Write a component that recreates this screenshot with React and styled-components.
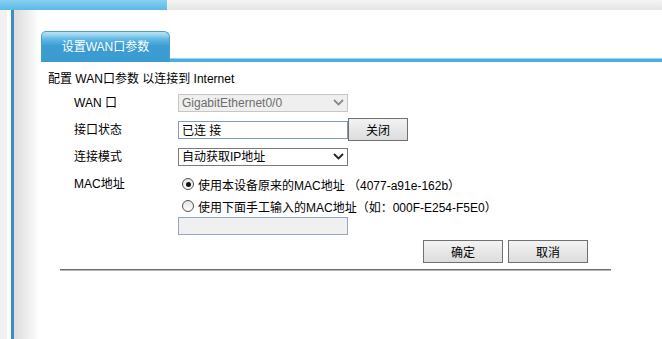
import React from 'react';
import styled, { createGlobalStyle } from 'styled-components';

const GlobalStyle = createGlobalStyle`
  html, body {
    margin: 0;
    padding: 0;
    background: #fff;
  }
  body {
    font-family: "Liberation Sans", Arial, "Noto Sans CJK SC", sans-serif;
    font-size: 12px;
    color: #000;
  }
`;

const Page = styled.div`
  width: 662px;
  height: 339px;
  overflow: hidden;
  display: flex;
  flex-direction: column;
`;

const TopBar = styled.div`
  display: flex;
  height: 10px;
  flex-shrink: 0;
`;

const TopSeg = styled.div`
  width: ${p => (p.$w ? `${p.$w}px` : 'auto')};
  flex: ${p => (p.$w ? 'none' : '1')};
  background: ${p =>
    p.$blue
      ? 'linear-gradient(#88d0f2, #5cb8e6)'
      : 'linear-gradient(#f4f4f4, #e5e5e5)'};
`;

const Body = styled.div`
  flex: 1;
  display: flex;
`;

const Rail = styled.div`
  width: 38px;
  flex-shrink: 0;
  background: linear-gradient(
    to right,
    #f1f1f1 0,
    #f1f1f1 7px,
    #fff 7px,
    #fff 11px,
    #3d8dc2 11px,
    #3d8dc2 14px,
    #dcdcdc 14px,
    #fcfcfc 38px
  );
`;

const Content = styled.div`
  flex: 1;
  padding-top: 21px;
`;

const TabHeader = styled.div`
  display: flex;
  align-items: flex-end;
  height: 31px;
  margin-left: 3px;
`;

const Tab = styled.div`
  width: 129px;
  height: 31px;
  box-sizing: border-box;
  border: 1px solid #4a9ed2;
  border-bottom: none;
  border-radius: 5px 6px 0 0;
  background: linear-gradient(
    #b9e2f5 0,
    #9ad4f0 3px,
    #63b9e4 7px,
    #3c9dd2 14px,
    #3a9bd0 100%
  );
  color: #fff;
  display: flex;
  align-items: center;
  justify-content: center;
  line-height: 14px;
`;

const TabLine = styled.div`
  flex: 1;
  height: 4px;
  background: linear-gradient(#95d3ef 0, #95d3ef 1px, #4baee0 1px);
`;

const Intro = styled.div`
  margin: 10px 0 0 10px;
  line-height: 14px;
`;

const Form = styled.div`
  margin: 3px 0 0 36px;
`;

const Row = styled.div`
  display: flex;
  align-items: ${p => (p.$top ? 'flex-start' : 'center')};
  height: ${p => (p.$top ? 'auto' : '27px')};
  padding-top: ${p => (p.$top ? '3px' : '0')};
`;

const Label = styled.div`
  width: 104px;
  flex: none;
  line-height: 22px;
`;

const SelectBox = styled.div`
  width: 170px;
  height: 18px;
  box-sizing: border-box;
  border: 1px solid ${p => (p.$disabled ? '#c6c6c6' : '#7a7a7a')};
  background: ${p => (p.$disabled ? '#efefef' : '#fff')};
  color: ${p => (p.$disabled ? '#6d6d6d' : '#000')};
  display: flex;
  align-items: center;
  justify-content: space-between;
  padding: 0 3px 0 3px;
  line-height: 16px;
`;

const TextField = styled.input`
  width: 170px;
  height: 18px;
  box-sizing: border-box;
  margin: 0;
  border: 1px solid ${p => (p.disabled ? '#8fa8c4' : '#7f9db9')};
  background: ${p => (p.disabled ? '#f0f0f0' : '#fff')};
  padding: 0 3px;
  font: inherit;
  color: #000;
  outline: none;
`;

const Button = styled.button`
  width: ${p => p.$w}px;
  height: 23px;
  box-sizing: border-box;
  margin: 0;
  padding: 0;
  border: 1px solid #707070;
  border-radius: 0;
  background: linear-gradient(#f3f3f3, #dcdcdc);
  font: inherit;
  color: #000;
`;

const Options = styled.div`
  display: flex;
  flex-direction: column;
`;

const Option = styled.label`
  display: flex;
  align-items: center;
  height: 22px;
  padding-left: 4px;
`;

const Radio = styled.span`
  position: relative;
  width: 12px;
  height: 12px;
  box-sizing: border-box;
  border-radius: 50%;
  border: 1px solid #505050;
  background: linear-gradient(#e4e4e4, #fff);
  margin-right: 4px;
  flex: none;

  &::after {
    content: '';
    display: ${p => (p.$checked ? 'block' : 'none')};
    position: absolute;
    left: 2.5px;
    top: 2.5px;
    width: 5px;
    height: 5px;
    border-radius: 50%;
    background: #111;
  }
`;

const Footer = styled.div`
  margin-left: 22px;
  width: 551px;
`;

const ButtonBar = styled.div`
  display: flex;
  justify-content: flex-end;
  gap: 5px;
  padding-right: 23px;
  margin-top: 5px;
`;

const Rule = styled.div`
  margin-top: 6px;
  border-top: 1px solid #6e6e6e;
  border-bottom: 1px solid #b8b8b8;
`;

const Chevron = ({ color }) => (
  <svg width="11" height="7" viewBox="0 0 11 7">
    <path d="M1 1 L5.5 5.5 L10 1" fill="none" stroke={color} strokeWidth="1.8" />
  </svg>
);

export default function App() {
  return (
    <Page>
      <GlobalStyle />
      <TopBar>
        <TopSeg $w={167} $blue />
        <TopSeg />
      </TopBar>
      <Body>
        <Rail />
        <Content>
          <TabHeader>
            <Tab>设置WAN口参数</Tab>
            <TabLine />
          </TabHeader>
          <Intro>配置 WAN口参数 以连接到 Internet</Intro>
          <Form>
            <Row>
              <Label>WAN 口</Label>
              <SelectBox $disabled>
                <span>GigabitEthernet0/0</span>
                <Chevron color="#8a8a8a" />
              </SelectBox>
            </Row>
            <Row>
              <Label>接口状态</Label>
              <TextField readOnly value="已连 接" />
              <Button $w={60}>关闭</Button>
            </Row>
            <Row>
              <Label>连接模式</Label>
              <SelectBox>
                <span>自动获取IP地址</span>
                <Chevron color="#222" />
              </SelectBox>
            </Row>
            <Row $top>
              <Label>MAC地址</Label>
              <Options>
                <Option>
                  <Radio $checked />
                  使用本设备原来的MAC地址 （4077-a91e-162b）
                </Option>
                <Option>
                  <Radio />
                  使用下面手工输入的MAC地址（如：000F-E254-F5E0）
                </Option>
                <TextField disabled value="" />
              </Options>
            </Row>
          </Form>
          <Footer>
            <ButtonBar>
              <Button $w={80}>确定</Button>
              <Button $w={80}>取消</Button>
            </ButtonBar>
            <Rule />
          </Footer>
        </Content>
      </Body>
    </Page>
  );
}
